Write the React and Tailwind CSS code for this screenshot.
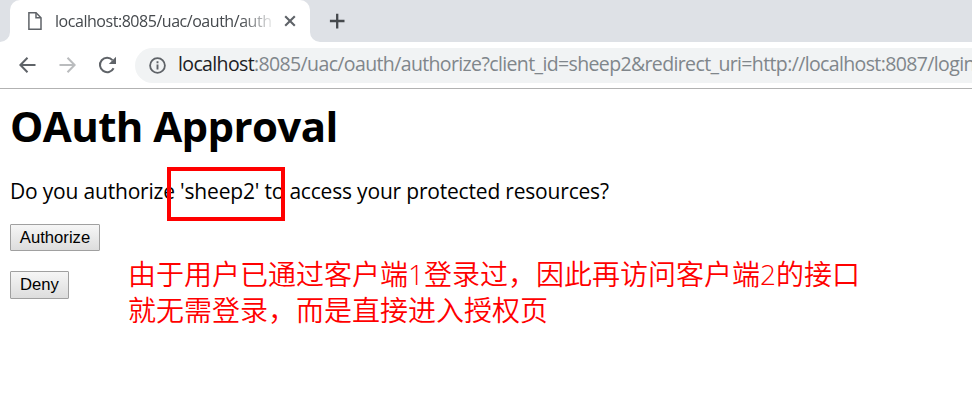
function TabStrip() {
  return (
    <div className="flex h-[42px] items-end bg-[#dee1e6]">
      <svg className="h-[42px] w-[10px] shrink-0" viewBox="0 0 10 42" fill="#fff">
        <path d="M0 42a10 10 0 0 0 10-10V42z" />
      </svg>
      <div className="flex h-[42px] w-[300px] shrink-0 items-center rounded-t-[10px] bg-white pl-[17px]">
        <svg className="h-[20px] w-[16px] shrink-0" viewBox="0 0 16 20" fill="none" stroke="#5f6368" strokeWidth="1.5">
          <path d="M1.9 1.8H9L14 6.8V18.2H1.9z" />
          <path d="M9 1.8V6.8H14" />
        </svg>
        <div className="ml-[12px] w-[221px] overflow-hidden whitespace-nowrap font-['Open_Sans','Noto_Sans',sans-serif] text-[16px] leading-[24px] tracking-[-0.46px] text-[#45494d] [mask-image:linear-gradient(to_right,black_84%,transparent)]">
          localhost:8085/uac/oauth/auth
        </div>
        <svg className="ml-[7px] h-[14px] w-[14px] shrink-0" viewBox="0 0 14 14" stroke="#5f6368" strokeWidth="2.1">
          <path d="M2.2 2.2l9.6 9.6M11.8 2.2L2.2 11.8" />
        </svg>
      </div>
      <svg className="h-[42px] w-[10px] shrink-0" viewBox="0 0 10 42" fill="#fff">
        <path d="M10 42A10 10 0 0 1 0 32V42z" />
      </svg>
      <svg className="mb-[13px] ml-[9px] h-[16px] w-[16px]" viewBox="0 0 16 16" stroke="#45494d" strokeWidth="2.3">
        <path d="M8.2 .8v14.6M.9 8h14.6" />
      </svg>
    </div>
  );
}

function Toolbar() {
  return (
    <div className="flex h-[47px] items-center overflow-hidden border-b border-[#b2b2b2] bg-white pl-[17px]">
      <svg className="h-[20px] w-[20px] shrink-0" viewBox="0 0 20 20" fill="none" stroke="#5f6368" strokeWidth="2">
        <path d="M18.5 10H4M10.5 2.8L3.4 10l7.1 7.2" />
      </svg>
      <svg className="ml-[20px] h-[20px] w-[20px] shrink-0" viewBox="0 0 20 20" fill="none" stroke="#babcbe" strokeWidth="2">
        <path d="M2.5 10H17M10.5 2.8l7.1 7.2-7.1 7.2" />
      </svg>
      <svg className="ml-[20px] h-[20px] w-[20px] shrink-0" viewBox="0 0 20 20" fill="none">
        <path d="M16.6 13.2A7.2 7.2 0 1 1 15.5 5.1" stroke="#5f6368" strokeWidth="2" />
        <path d="M19 1.8V9H11.8z" fill="#5f6368" />
      </svg>
      <div className="ml-[18px] flex h-[35px] w-[900px] shrink-0 items-center rounded-l-full bg-[#f1f3f4] pl-[14px]">
        <svg className="h-[17px] w-[17px] shrink-0" viewBox="0 0 17 17" fill="none">
          <circle cx="8.5" cy="8.5" r="7.4" stroke="#5f6368" strokeWidth="1.8" />
          <path d="M8.5 7.6v5M8.5 4.3v1.9" stroke="#5f6368" strokeWidth="1.9" />
        </svg>
        <div className="mb-[2px] ml-[12px] whitespace-nowrap font-['Open_Sans','Noto_Sans',sans-serif] text-[19.5px] leading-[30px] tracking-[-0.63px] text-[#80868b]">
          <span className="text-[#202124]">localhost</span>
          :8085/uac/oauth/authorize?client_id=sheep2&amp;redirect_uri=http://localhost:8087/login
        </div>
      </div>
    </div>
  );
}

function ActionButton({ children, className }) {
  return (
    <button
      className={`block rounded-[1px] border border-[#a0a0a0] bg-linear-to-b from-[#f6f6f6] to-[#dddddd] font-['Liberation_Sans',sans-serif] text-[16.67px] leading-[24px] text-black ${className}`}
    >
      {children}
    </button>
  );
}

export default function App() {
  return (
    <div className="h-[414px] w-[972px] overflow-hidden bg-white">
      <TabStrip />
      <Toolbar />
      <main className="relative pl-[10px] pt-[9px] font-['Open_Sans','Noto_Sans',sans-serif] text-black">
        <h1 className="h-[56px] whitespace-nowrap text-[42px] font-bold leading-[55px] tracking-[-0.6px]">OAuth Approval</h1>
        <p className="mt-[23px] h-[29px] whitespace-nowrap text-[21px] leading-[28px] tracking-[-0.19px]">
          Do you authorize 'sheep2' to access your protected resources?
        </p>
        <div className="flex">
          <div className="w-[118px] pt-[18px]">
            <ActionButton className="h-[27px] w-[90px]">Authorize</ActionButton>
            <ActionButton className="mt-[20px] h-[28px] w-[59px]">Deny</ActionButton>
          </div>
          <p className="whitespace-nowrap pt-[50px] font-['Open_Sans','Noto_Sans_CJK_SC',sans-serif] text-[28px] font-[350] leading-[36px] text-[#ff0000]">
            由于用户已通过客户端1登录过，因此再访问客户端2的接口
            <br />
            就无需登录，而是直接进入授权页
          </p>
        </div>
        <div className="absolute left-[167px] top-[78px] h-[54px] w-[118px] border-4 border-[#ff0000]" />
      </main>
    </div>
  );
}
